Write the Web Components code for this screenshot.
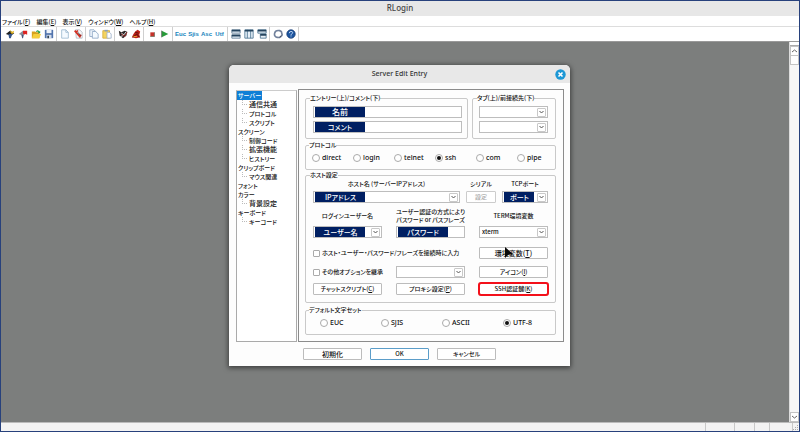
<!DOCTYPE html>
<html>
<head>
<meta charset="utf-8">
<title>RLogin</title>
<style>
  html, body { margin: 0; height: 100%; }
  body {
    font: 500 6px/8px "Noto Sans CJK JP", "Noto Sans", sans-serif;
    font-feature-settings: "palt";
    color: #111;
    overflow: hidden;
  }
</style>
</head>
<body>
<rl-app></rl-app>
<script>
const base = `*, *::before { box-sizing: border-box; }
  button, input, select { font: inherit; font-feature-settings: inherit; color: inherit; margin: 0; padding: 0; border: 0; outline: 0; border-radius: 0; }
  u { text-underline-offset: 1px; text-decoration-thickness: 1px; }`;

function define(name, render) {
  customElements.define(name, class extends HTMLElement {
    connectedCallback() {
      if (this.shadowRoot) return;
      const t = document.createElement('template');
      t.innerHTML = render(this);
      this.attachShadow({ mode: 'open' }).append(t.content.cloneNode(true));
    }
  });
}
const attr = (el, n, d = '') => el.getAttribute(n) ?? d;

/* Toolbar glyphs on a 12 x 12 grid */
const icons = {
  connect: '<path d="M1 6l5-4 5 3-4 3z" fill="#222"/><path d="M6 1l2 2-1 2z" fill="#d9b52b"/><path d="M4 6h5l-1 2-1 3H5z" fill="#34558b"/><path d="M7 4l4-2-1 3-2 1z" fill="#e8ba24"/>',
  disconnect: '<path d="M1 6l5-4 2 3-2 3z" fill="#8b8f9b"/><path d="M6 2h5v5l-2-1-2 1-1-2z" fill="#d22"/><path d="M4 7l3 0-1 4H5z" fill="#49587d"/>',
  open: '<path d="M1 3h4l1 1h4v7H1z" fill="#d7a11b"/><path d="M3 6h9l-2 5H1z" fill="#f5ce3b"/><path d="M6 3q2-3 4 0l1-1v3H8l1-1Q8 2 7 4z" fill="#25a04b"/>',
  save: '<path d="M1 1h10v10H1z" fill="#5274ad"/><path d="M3 1h6v4H3z" fill="#eef3fa"/><path d="M3 7h6v4H3z" fill="#d3ddeb"/><path d="M4 8h2v3H4z" fill="#345"/>',
  page: '<path d="M2 1h5l3 3v7H2z" fill="#f4faff" stroke="#9bb8d0"/><path d="M7 1v3h3" fill="none" stroke="#9bb8d0"/>',
  cut: '<path d="M3 1h5l3 3v7H4z" fill="#f7f7f7" stroke="#b1b8c4"/><path d="M2 2l7 8M3 4l3-2M7 9l3-2" stroke="#d33024" stroke-width="2"/><path d="M6 4l3 4" stroke="#333"/>',
  copy: '<path d="M1 1h5l2 2v6H1z" fill="#f4faff" stroke="#8da6c4"/><path d="M4 3h4l3 3v5H4z" fill="#f4faff" stroke="#8da6c4"/>',
  paste: '<path d="M1 2h8v9H1z" fill="#f5d45e" stroke="#d2ac39"/><path d="M3 1h4v2H3z" fill="#8ba0b9"/><path d="M6 4h3l2 2v5H6z" fill="#fff" stroke="#9cb0ca"/>',
  trace: '<path d="M1 2l3 2 4-2 3 1-1 5-4 3-4-3z" fill="#2a2627"/><path d="M4 5l3 2 3-4M3 9l3-1" stroke="#fff" fill="none"/><path d="M4 6l4 3 3-5" stroke="#b8322c" fill="none"/>',
  bell: '<path d="M5 3l3-2 3 2-1 4 1 3-5 1-5-1 2-4z" fill="#bd2018"/><path d="M5 4l4 1M2 10l5-4 3 4" stroke="#4a100c" fill="none"/><path d="M3 9h4" stroke="#edb72e"/>',
  stop: '<path d="M4 4h5v5H4z" fill="#c4332b"/><path d="M4 9h5M9 4v5" stroke="#776"/>',
  play: '<path d="M2 2l8 4-8 4z" fill="#279c39"/><path d="M2 2v8" stroke="#666"/>',
  rows: '<path d="M1 1h10v4H1zM1 7h10v4H1z" fill="#e7f0f8" stroke="#607c94"/><path d="M1 2h10M1 8h10" stroke="#25445f" stroke-width="2"/>',
  cols: '<path d="M1 1h10v10H1zM4 1v10M8 1v10" fill="#e7f0f8" stroke="#49718f"/><path d="M1 2h10" stroke="#25445f" stroke-width="2"/>',
  cascade: '<path d="M1 1h10v4H1zM4 6h7v5H4z" fill="#e7f0f8" stroke="#49718f"/><path d="M1 2h10M4 7h7" stroke="#25445f" stroke-width="2"/>',
  ring: '<path d="M2 5Q3 1 8 2l2 1 1 4q-2 4-6 3-4-1-3-5z" fill="#fff" stroke="#71819c" stroke-width="2"/><path d="M8 10l2-2" stroke="#445"/>',
  help: '<circle cx="6" cy="6" r="5" fill="#1d55a0" stroke="#163b73"/><path d="M4 5q0-2 2-2t2 1-2 3v1m0 1v1" fill="none" stroke="#dfeeff"/>'
};

define('tool-button', el => `<style>${base}
  :host { display: block; width: 13px; }
  button { display: grid; place-items: center; width: 100%; height: 14px; background: none; font: 700 6px/10px "Liberation Sans", sans-serif; color: #1685bd; }
  svg { width: 10px; height: 10px; display: block; }
  </style><button aria-label="${attr(el, 'label')}">${el.hasAttribute('icon') ? `<svg viewBox="0 0 12 12">${icons[attr(el, 'icon')]}</svg>` : '<slot></slot>'}</button>`);

define('tool-group', () => `<style>
  :host { display: flex; padding-right: 1px; margin-right: 1px; border-right: 1px solid #cfcfcf; }
  </style><slot></slot>`);

define('menu-item', el => `<style>${base}
  :host { display: block; }
  button { display: block; background: none; line-height: 12px; white-space: nowrap; }
  </style><button><slot></slot>(<u>${attr(el, 'key')}</u>)</button>`);

define('scroll-bar', () => `<style>${base}
  :host { display: flex; flex-direction: column; width: 10px; background: #f7f7f7; border-left: 1px solid #ddd; }
  .split { height: 4px; border-bottom: 1px solid #aaa; background: #fff; }
  button { display: grid; place-items: center; height: 10px; background: #fff; border: 1px solid #c4c4c4; }
  .thumb { height: 9px; background: #fff; border: 1px solid #c4c4c4; border-top: 0; }
  .track { flex: 1; }
  svg { width: 5px; height: 4px; fill: none; stroke: #666; }
  </style><div class="split"></div>
  <button aria-label="Up"><svg viewBox="0 0 5 4"><path d="M0 3l2.500-2 2.500 2"/></svg></button>
  <div class="thumb"></div><div class="track"></div>
  <button aria-label="Down"><svg viewBox="0 0 5 4"><path d="M0 1l2.500 2 2.500-2"/></svg></button>`);

define('status-bar', () => `<style>${base}
  :host { display: flex; justify-content: flex-end; height: 9px; background: #f3f3f3; border-top: 1px solid #bbb; }
  span { border-left: 1px solid #c8c8c8; }
  span:nth-child(1) { width: 24px; } span:nth-child(2) { width: 29px; }
  span:nth-child(3) { width: 20px; } span:nth-child(4) { width: 15px; } span:nth-child(5) { width: 23px; }
  svg { width: 6px; height: 6px; align-self: end; fill: #aaa; }
  </style><span></span><span></span><span></span><span></span><span></span><svg viewBox="0 0 6 6"><path d="M4 0h1v1H4zM2 2h1v1H2zM4 2h1v1H4zM0 4h1v1H0zM2 4h1v1H2zM4 4h1v1H4z"/></svg>`);

define('group-box', el => `<style>${base}
  :host { display: block; min-width: 0; }
  fieldset { margin: 0; min-width: 0; border: 1px solid #c9c9c9; border-radius: 2px; padding: var(--pad, 4px 6px 6px); }
  legend { margin-left: var(--legend-left, -3px); padding: 0; line-height: 8px; white-space: nowrap; }
  </style><fieldset><legend>${attr(el, 'label')}</legend><slot></slot></fieldset>`);

define('text-box', el => `<style>${base}
  :host { display: block; min-width: 0; height: 12px; border: 1px solid #bdbdbd; background: #fff; padding: 0 1px; }
  input { display: block; width: var(--sel, 50px); height: 10px; background: #001f62; color: #fff; text-align: center; font-size: 7px; line-height: 10px; }
  :host([large]) input { font-size: 8px; }
  </style><input aria-label="${attr(el, 'label')}" value="${attr(el, 'value')}">`);

define('combo-box', el => `<style>${base}
  :host { display: grid; grid-template-columns: minmax(0, 1fr) 10px; align-items: center; min-width: 0; height: 12px; border: 1px solid #bdbdbd; background: #fff; }
  select { grid-area: 1 / 1 / 2 / 3; appearance: none; width: 100%; height: 10px; line-height: 10px; padding-left: 2px; background: none; font-size: 6px; }
  :host([selected]) select { padding-left: 1px; width: var(--sel, 50px); margin-left: 1px; background: #001f62; color: #fff; text-align: center; font-size: 7px; }
  i { grid-area: 1 / 2; display: grid; place-items: center; height: 9px; width: 9px; border: 1px solid #c9c9c9; border-radius: 1px; background: #fff; pointer-events: none; }
  svg { width: 5px; height: 4px; fill: none; stroke: #555; }
  </style><select aria-label="${attr(el, 'label')}"><option>${attr(el, 'value')}</option></select>
  <i><svg viewBox="0 0 5 4"><path d="M.5 1l2 2 2-2"/></svg></i>`);

define('push-button', el => `<style>${base}
  :host { display: block; min-width: 0; }
  button { display: block; width: 100%; height: 12px; line-height: 10px; background: #fff; border: 1px solid #bcbcbc; border-radius: 1px; white-space: nowrap; }
  :host([large]) button { font-size: 7px; }
  button:disabled { color: #aaa; border-color: #ccc; }
  :host([default]) button { border-color: #5b9dc9; }
  :host([marked]) button { outline: 2px solid #f3101a; outline-offset: -1px; border-radius: 2px; }
  </style><button ${el.hasAttribute('disabled') ? 'disabled' : ''}><slot></slot>${el.hasAttribute('key') ? `(<u>${attr(el, 'key')}</u>)` : ''}</button>`);

define('check-box', () => `<style>${base}
  :host { display: block; align-self: center; }
  label { display: flex; align-items: center; gap: 2px; white-space: nowrap; }
  input { appearance: none; flex: none; width: 7px; height: 7px; border: 1px solid #aaa; border-radius: 1px; background: #fff; }
  </style><label><input type="checkbox"><slot></slot></label>`);

/* options: comma separated, the checked one starts with "*" */
define('radio-row', el => `<style>${base}
  :host { display: grid; grid-auto-flow: column; grid-auto-columns: var(--step, 41px); height: 10px; font-family: "Noto Sans", sans-serif; font-size: 7px; }
  label { display: flex; align-items: center; gap: 2px; white-space: nowrap; }
  input { appearance: none; display: grid; place-items: center; width: 8px; height: 8px; border: 1px solid #aaa; border-radius: 50%; background: #fff; }
  input:checked::before { content: ""; width: 4px; height: 4px; border-radius: 50%; background: #111; }
  </style>${attr(el, 'options').split(',').map(o => `<label><input type="radio" name="r" ${o[0] === '*' ? 'checked' : ''}>${o.replace('*', '')}</label>`).join('')}`);

define('nav-tree', () => `<style>${base}
  :host { display: block; margin-top: 1px; border: 1px solid #aaa; border-top-color: #ccc; background: #fff; overflow: hidden; line-height: 9px; white-space: nowrap; }
  ul { list-style: none; margin: 0; padding: 0 0 0 1px; }
  ul ul { padding-left: 4px; }
  ul ul li { display: flex; gap: 2px; }
  ul ul li::before { content: ""; width: 5px; height: 5px; border: dotted #bbb; border-width: 0 0 1px 1px; }
  .kanji { font-size: 7px; }
  .on { background: #0f7fd6; color: #fff; padding: 0 1px; margin-left: -1px; display: block; width: 25px; }
  </style><ul>
  <li><span class="on">サーバー</span><ul><li class="kanji">通信共通</li><li>プロトコル</li><li>スクリプト</li></ul></li>
  <li>スクリーン<ul><li>制御コード</li><li class="kanji">拡張機能</li><li>ヒストリー</li></ul></li>
  <li>クリップボード<ul><li>マウス関連</li></ul></li>
  <li>フォント</li>
  <li>カラー<ul><li class="kanji">背景設定</li></ul></li>
  <li>キーボード<ul><li>キーコード</li></ul></li></ul>`);

define('entry-dialog', () => `<style>${base}
  :host { display: block; width: 341px; background: #fdfdfd; border-radius: 5px 5px 0 0; box-shadow: 0 1px 5px 1px rgba(0,0,0,.5); }
  header { display: grid; grid-template-columns: 1fr auto 1fr; align-items: center; height: 18px; padding: 0 4px; background: #e8e8e8; border-radius: 5px 5px 0 0; }
  h2 { grid-column: 2; margin: 0; font: 500 7px/10px "Noto Sans", sans-serif; color: #333; }
  header button { justify-self: end; width: 11px; height: 11px; background: none; }
  header svg { display: block; width: 11px; height: 11px; }
  main { display: grid; grid-template-columns: 61px minmax(0, 1fr); gap: 1px; padding: 6px 6px 0 7px; }
  .panel { display: grid; grid-template-columns: minmax(0, 1fr); border: 1px solid #8c8c8c; padding: 4px 7px 6px 6px; background: #fdfdfd; }
  .top { display: grid; grid-template-columns: 163px minmax(0, 1fr); gap: 4px; }
  .stack { display: grid; gap: 3px; }
  .top group-box { --pad: 4px 5px 5px 7px; }
  .top group-box + group-box { --pad: 4px 7px 5px 6px; --legend-left: -2px; }
  .proto { margin-top: 2px; }
  .host { margin-top: 1px; --pad: 1px 7px 7px; }
  .chars { margin-top: 3px; --pad: 4px 6px 6px 14px; --legend-left: -11px; }
  .chars radio-row { --step: 61px; }
  .r1 { display: grid; grid-template-columns: 147px 30px 46px; row-gap: 3px; justify-content: space-between; text-align: center; white-space: nowrap; }
  .r1 combo-box:last-child { --sel: 30px; }
  .r3 { display: grid; grid-template-columns: repeat(3, minmax(0, 1fr)); column-gap: 14px; }
  .labels { margin-top: 5px; align-items: center; text-align: center; white-space: nowrap; }
  .fields { margin-top: 2px; }
  .a { margin-top: 9px; } .b { margin-top: 7px; } .c { margin-top: 5px; }
  .wide { grid-column: span 2; }
  footer { display: flex; justify-content: center; gap: 8px; padding: 6px 0 6px; }
  footer push-button { width: 59px; }
  </style>
  <header><h2>Server Edit Entry</h2><button aria-label="Close"><svg viewBox="0 0 11 11"><circle cx="5.500" cy="5.500" r="5.200" fill="#1c97d5"/><path d="M3.500 3.500l4 4m0-4l-4 4" stroke="#fff" stroke-width="1.600"/></svg></button></header>
  <main><nav-tree></nav-tree><div class="panel">
    <div class="top">
      <group-box label="エントリー(上)/コメント(下)"><div class="stack"><text-box large label="エントリー" value="名前"></text-box><text-box label="コメント" value="コメント"></text-box></div></group-box>
      <group-box label="タブ(上)/前接続先(下)"><div class="stack"><combo-box label="タブ"></combo-box><combo-box label="前接続先"></combo-box></div></group-box>
    </div>
    <group-box class="proto" label="プロトコル"><radio-row options="direct,login,telnet,*ssh,com,pipe"></radio-row></group-box>
    <group-box class="host" label="ホスト設定">
      <div class="r1"><span>ホスト名 (サーバーIPアドレス)</span><span>シリアル</span><span>TCPポート</span>
        <combo-box selected label="ホスト名" value="IPアドレス"></combo-box><push-button disabled>設定</push-button><combo-box selected label="TCPポート" value="ポート"></combo-box></div>
      <div class="r3 labels"><span>ログインユーザー名</span><span>ユーザー認証の方式により<br>パスワード or パスフレーズ</span><span>TERM環境変数</span></div>
      <div class="r3 fields"><combo-box selected label="ログインユーザー名" value="ユーザー名"></combo-box><text-box label="パスワード" value="パスワード"></text-box><combo-box label="TERM環境変数" value="xterm"></combo-box></div>
      <div class="r3 a"><check-box class="wide">ホスト・ユーザー・パスワード/フレーズを接続時に入力</check-box><push-button large key="T">環境変数</push-button></div>
      <div class="r3 b"><check-box>その他オプションを継承</check-box><combo-box label="オプション"></combo-box><push-button key="I">アイコン</push-button></div>
      <div class="r3 c"><push-button key="C">チャットスクリプト</push-button><push-button key="P">プロキシ設定</push-button><push-button marked key="K">SSH認証鍵</push-button></div>
    </group-box>
    <group-box class="chars" label="デフォルト文字セット"><radio-row options="EUC,SJIS,ASCII,*UTF-8"></radio-row></group-box>
  </div></main>
  <footer><push-button large>初期化</push-button><push-button default>OK</push-button><push-button>キャンセル</push-button></footer>`);

define('rl-app', () => `<style>${base}
  :host { display: flex; flex-direction: column; position: relative; height: 100vh; box-sizing: border-box; border: 1px solid #27417c; background: #fff; }
  h1 { margin: 0; height: 15px; background: #e7e7e7; text-align: center; font: 500 8px/14px "Noto Sans", sans-serif; color: #444; }
  nav { display: flex; gap: 6px; height: 11px; padding-left: 1px; border-bottom: 1px solid #ddd; }
  .tools { display: flex; height: 15px; padding-left: 2px; border-bottom: 1px solid #999; }
  .work { flex: 1; display: flex; background: #7c7e7d; }
  scroll-bar { margin-left: auto; }
  entry-dialog { position: absolute; inset: 0 1px 1px 0; margin: auto; height: fit-content; }
  .cursor { position: absolute; left: 503px; top: 245px; width: 9px; height: 13px; }
  </style>
  <h1>RLogin</h1>
  <nav><menu-item key="F">ファイル</menu-item><menu-item key="E">編集</menu-item><menu-item key="V">表示</menu-item><menu-item key="W">ウィンドウ</menu-item><menu-item key="H">ヘルプ</menu-item></nav>
  <div class="tools">
    <tool-group><tool-button icon="connect" label="Connect"></tool-button><tool-button icon="disconnect" label="Disconnect"></tool-button><tool-button icon="open" label="Open"></tool-button><tool-button icon="save" label="Save"></tool-button></tool-group>
    <tool-group><tool-button icon="page" label="New"></tool-button><tool-button icon="cut" label="Cut"></tool-button></tool-group>
    <tool-group><tool-button icon="copy" label="Copy"></tool-button><tool-button icon="paste" label="Paste"></tool-button></tool-group>
    <tool-group><tool-button icon="trace" label="Trace"></tool-button><tool-button icon="bell" label="Break"></tool-button></tool-group>
    <tool-group><tool-button icon="stop" label="Stop"></tool-button><tool-button icon="play" label="Play"></tool-button></tool-group>
    <tool-group><tool-button label="EUC">Euc</tool-button><tool-button label="SJIS">Sjis</tool-button><tool-button label="ASCII">Asc</tool-button><tool-button label="UTF-8">Utf</tool-button></tool-group>
    <tool-group><tool-button icon="rows" label="Split rows"></tool-button><tool-button icon="cols" label="Split columns"></tool-button><tool-button icon="cascade" label="Cascade"></tool-button></tool-group>
    <tool-group><tool-button icon="ring" label="Options"></tool-button><tool-button icon="help" label="Help"></tool-button></tool-group>
  </div>
  <div class="work"><scroll-bar></scroll-bar></div>
  <status-bar></status-bar>
  <entry-dialog></entry-dialog>
  <svg class="cursor" viewBox="0 0 9 13"><path d="M1 1v11l3-3 5-1z" fill="#080808"/></svg>`);
</script>
</body>
</html>
